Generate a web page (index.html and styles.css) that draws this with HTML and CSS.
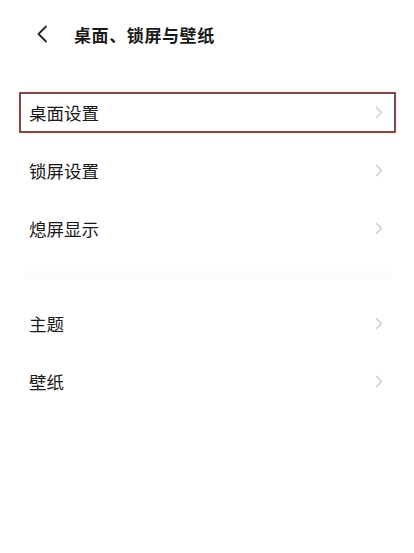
FILE: index.html
```html
<!DOCTYPE html>
<html lang="zh-CN">

<head>
    <meta charset="UTF-8">
    <meta name="viewport" content="width=device-width, initial-scale=1.0">
    <title>桌面、锁屏与壁纸</title>
    <link rel="stylesheet" href="styles.css">
</head>

<body>

    <!-- Top bar with back arrow -->
    <div class="topbar">
        <span class="back">
            <svg width="12" height="18" viewBox="0 0 12 18">
                <path d="M10 1.5 L2.5 9 L10 16.5" fill="none" stroke="#222" stroke-width="1.8" stroke-linecap="round" stroke-linejoin="round" />
            </svg>
        </span>
        <h1>桌面、锁屏与壁纸</h1>
    </div>

    <!-- First group -->
    <div class="group first">
        <div class="row marked">
            <span>桌面设置</span>
            <svg class="arrow" width="8" height="13" viewBox="0 0 8 13">
                <path d="M1 1 L6.5 6.5 L1 12" fill="none" stroke="#c9c9c9" stroke-width="1.3" />
            </svg>
        </div>
        <div class="row">
            <span>锁屏设置</span>
            <svg class="arrow" width="8" height="13" viewBox="0 0 8 13">
                <path d="M1 1 L6.5 6.5 L1 12" fill="none" stroke="#c9c9c9" stroke-width="1.3" />
            </svg>
        </div>
        <div class="row">
            <span>熄屏显示</span>
            <svg class="arrow" width="8" height="13" viewBox="0 0 8 13">
                <path d="M1 1 L6.5 6.5 L1 12" fill="none" stroke="#c9c9c9" stroke-width="1.3" />
            </svg>
        </div>
    </div>

    <div class="divider"></div>

    <!-- Second group -->
    <div class="group">
        <div class="row">
            <span>主题</span>
            <svg class="arrow" width="8" height="13" viewBox="0 0 8 13">
                <path d="M1 1 L6.5 6.5 L1 12" fill="none" stroke="#c9c9c9" stroke-width="1.3" />
            </svg>
        </div>
        <div class="row">
            <span>壁纸</span>
            <svg class="arrow" width="8" height="13" viewBox="0 0 8 13">
                <path d="M1 1 L6.5 6.5 L1 12" fill="none" stroke="#c9c9c9" stroke-width="1.3" />
            </svg>
        </div>
    </div>

</body>

</html>
```

FILE: styles.css
```css
body {
    margin: 0;
    background: #fff;
    color: #1a1a1a;
    font-family: "Noto Sans CJK SC", "Noto Sans", sans-serif;
}

.topbar {
    display: flex;
    align-items: center;
    height: 68px;
    padding-left: 36px;
}

.back {
    display: flex;
    width: 38px;
}

h1 {
    margin: 0;
    font-size: 17px;
    font-weight: 700;
    letter-spacing: 0.6px;
}

.group {
    display: flex;
    flex-direction: column;
    gap: 17px;
    padding: 0 18px 0 19px;
}

.group.first {
    margin-top: 24px;
}

.row {
    display: flex;
    align-items: center;
    justify-content: space-between;
    height: 37px;
    padding: 0 11px 0 8px;
    border: 2px solid transparent;
    font-size: 17.5px;
}

/* the row picked out with a frame */
.row.marked {
    border-color: #7d4b4b;
    box-shadow: 0 0 2px rgba(210, 120, 120, 0.35);
}

.arrow {
    display: block;
}

.divider {
    height: 8px;
    margin: 22px 22px 24px 24px;
    background: #fcfcfc;
}
```
